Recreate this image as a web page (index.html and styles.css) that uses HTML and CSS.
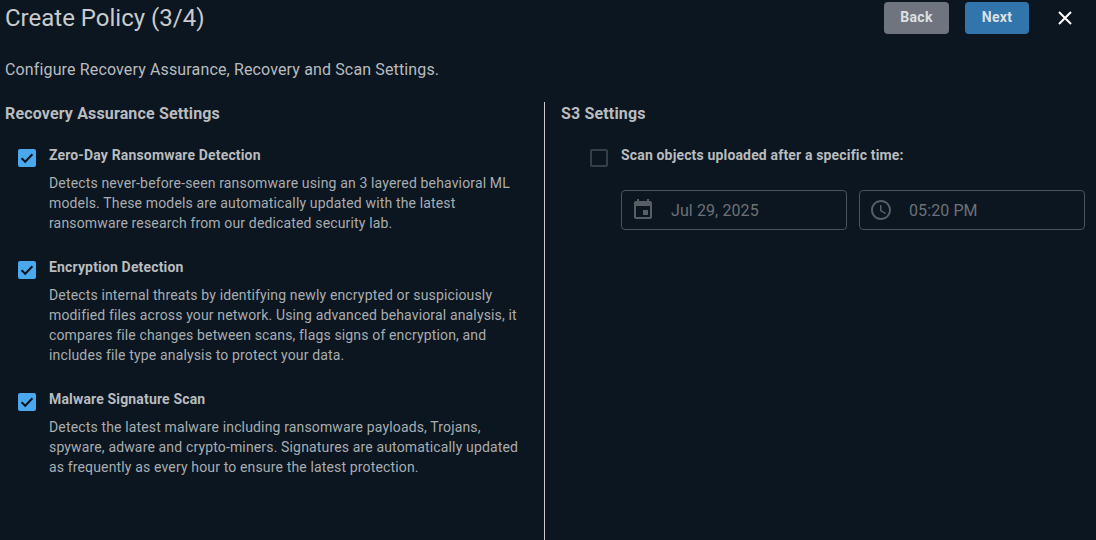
FILE: index.html
```html
<!DOCTYPE html>
<html lang="en">
<head>
<meta charset="utf-8">
<title>Create Policy</title>
<link rel="stylesheet" href="styles.css">
</head>
<body>
<header class="top">
  <h1 class="title">Create Policy (3/4)</h1>
  <div class="actions">
    <button class="btn back">Back</button>
    <button class="btn next">Next</button>
    <svg class="close" viewBox="0 0 14 14" width="14" height="14"><path d="M1 1L13 13M13 1L1 13" stroke="#fff" stroke-width="2" fill="none"/></svg>
  </div>
</header>
<p class="intro">Configure Recovery Assurance, Recovery and Scan Settings.</p>
<main class="columns">
  <section class="left">
    <h2 class="heading">Recovery Assurance Settings</h2>
    <div class="option first">
      <span class="box on"><svg viewBox="0 0 18 18" width="18" height="18"><path d="M3.6 9.2L7.2 12.8L14.4 5.2" stroke="#0b1620" stroke-width="2" fill="none"/></svg></span>
      <div class="body">
        <div class="label">Zero-Day Ransomware Detection</div>
        <p class="desc">Detects never-before-seen ransomware using an 3 layered behavioral ML models. These models are automatically updated with the latest ransomware research from our dedicated security lab.</p>
      </div>
    </div>
    <div class="option">
      <span class="box on"><svg viewBox="0 0 18 18" width="18" height="18"><path d="M3.6 9.2L7.2 12.8L14.4 5.2" stroke="#0b1620" stroke-width="2" fill="none"/></svg></span>
      <div class="body">
        <div class="label">Encryption Detection</div>
        <p class="desc">Detects internal threats by identifying newly encrypted or suspiciously modified files across your network. Using advanced behavioral analysis, it compares file changes between scans, flags signs of encryption, and includes file type analysis to protect your data.</p>
      </div>
    </div>
    <div class="option">
      <span class="box on"><svg viewBox="0 0 18 18" width="18" height="18"><path d="M3.6 9.2L7.2 12.8L14.4 5.2" stroke="#0b1620" stroke-width="2" fill="none"/></svg></span>
      <div class="body">
        <div class="label">Malware Signature Scan</div>
        <p class="desc">Detects the latest malware including ransomware payloads, Trojans, spyware, adware and crypto-miners. Signatures are automatically updated as frequently as every hour to ensure the latest protection.</p>
      </div>
    </div>
  </section>
  <section class="right">
    <h2 class="heading">S3 Settings</h2>
    <div class="option first s3">
      <span class="box"></span>
      <div class="label">Scan objects uploaded after a specific time:</div>
    </div>
    <div class="fields">
      <div class="field">
        <svg viewBox="0 0 24 24" width="24" height="24"><path fill="#565e66" d="M17 12h-5v5h5v-5zM16 1v2H8V1H6v2H5c-1.11 0-2 .9-2 2v14c0 1.1.89 2 2 2h14c1.1 0 2-.9 2-2V5c0-1.1-.9-2-2-2h-1V1h-2zm3 18H5V8h14v11z"/></svg>
        <span>Jul 29, 2025</span>
      </div>
      <div class="field">
        <svg viewBox="0 0 24 24" width="24" height="24"><path fill="#565e66" d="M11.99 2C6.47 2 2 6.48 2 12s4.47 10 9.99 10C17.52 22 22 17.52 22 12S17.52 2 11.99 2zM12 20c-4.42 0-8-3.58-8-8s3.58-8 8-8 8 3.58 8 8-3.58 8-8 8zm.5-13H11v6l5.25 3.15.75-1.23-4.5-2.67z"/></svg>
        <span>05:20 PM</span>
      </div>
    </div>
  </section>
</main>
</body>
</html>
```
FILE: styles.css
```css
* { box-sizing: border-box; }
html, body { margin: 0; height: 100%; }
body {
  background: #0b1620;
  font-family: Roboto, "Liberation Sans", sans-serif;
  color: #b9bcbf;
  width: 1096px;
  height: 540px;
  overflow: hidden;
}
.top {
  display: flex;
  justify-content: space-between;
  align-items: flex-start;
  padding: 2px 24px 0 5px;
  height: 34px;
}
.title {
  margin: 0;
  font-size: 24px;
  line-height: 32px;
  font-weight: 400;
  color: #c9cbcd;
}
.actions { display: flex; align-items: center; }
.btn {
  height: 32px;
  border: 0;
  border-radius: 4px;
  font: 700 14px/30px Roboto, sans-serif;
  letter-spacing: .3px;
  color: #dde0e3;
  padding: 0 0 2px;
}
.back { width: 65px; background: #6f747e; margin-right: 16px; }
.next { width: 64px; background: #3275ad; margin-right: 29px; }
.close { display: block; }
.intro {
  margin: 0;
  padding: 26px 0 0 5px;
  font-size: 16px;
  line-height: 20px;
  letter-spacing: .14px;
  color: #b9bcbf;
}
.columns {
  display: flex;
  margin-top: 22px;
  height: 439px;
}
.left { width: 545px; padding-left: 5px; border-right: 1px solid #c8cacc; }
.right { flex: 1; padding-left: 16px; }
.heading {
  margin: 0;
  font-size: 16px;
  line-height: 24px;
  font-weight: 700;
  letter-spacing: .15px;
  color: #b9bcbf;
}
.option { display: flex; margin: 24px 0 0 13px; width: 510px; }
.option.first { margin-top: 19px; }
.option.s3 { margin-left: 29px; width: auto; }
.box {
  flex: none;
  width: 18px;
  height: 18px;
  margin-top: 4px;
  margin-right: 13px;
  border-radius: 2px;
  border: 2px solid #363e47;
}
.box.on { background: #4aa8ec; border: 0; }
.box svg { display: block; }
.label {
  font-size: 14px;
  line-height: 20px;
  font-weight: 700;
  letter-spacing: .16px;
  color: #b9bcbf;
}
.desc {
  margin: 8px 0 0;
  font-size: 14px;
  line-height: 20px;
  letter-spacing: .15px;
  color: #a9adb1;
}
.fields { display: flex; gap: 12px; margin: 23px 0 0 60px; }
.field {
  display: flex;
  align-items: center;
  width: 226px;
  height: 40px;
  padding-left: 9px;
  border: 1px solid #4a525a;
  border-radius: 4px;
  font-size: 16px;
  letter-spacing: .1px;
  color: #6b7177;
}
.field span { margin-left: 16px; }
```
